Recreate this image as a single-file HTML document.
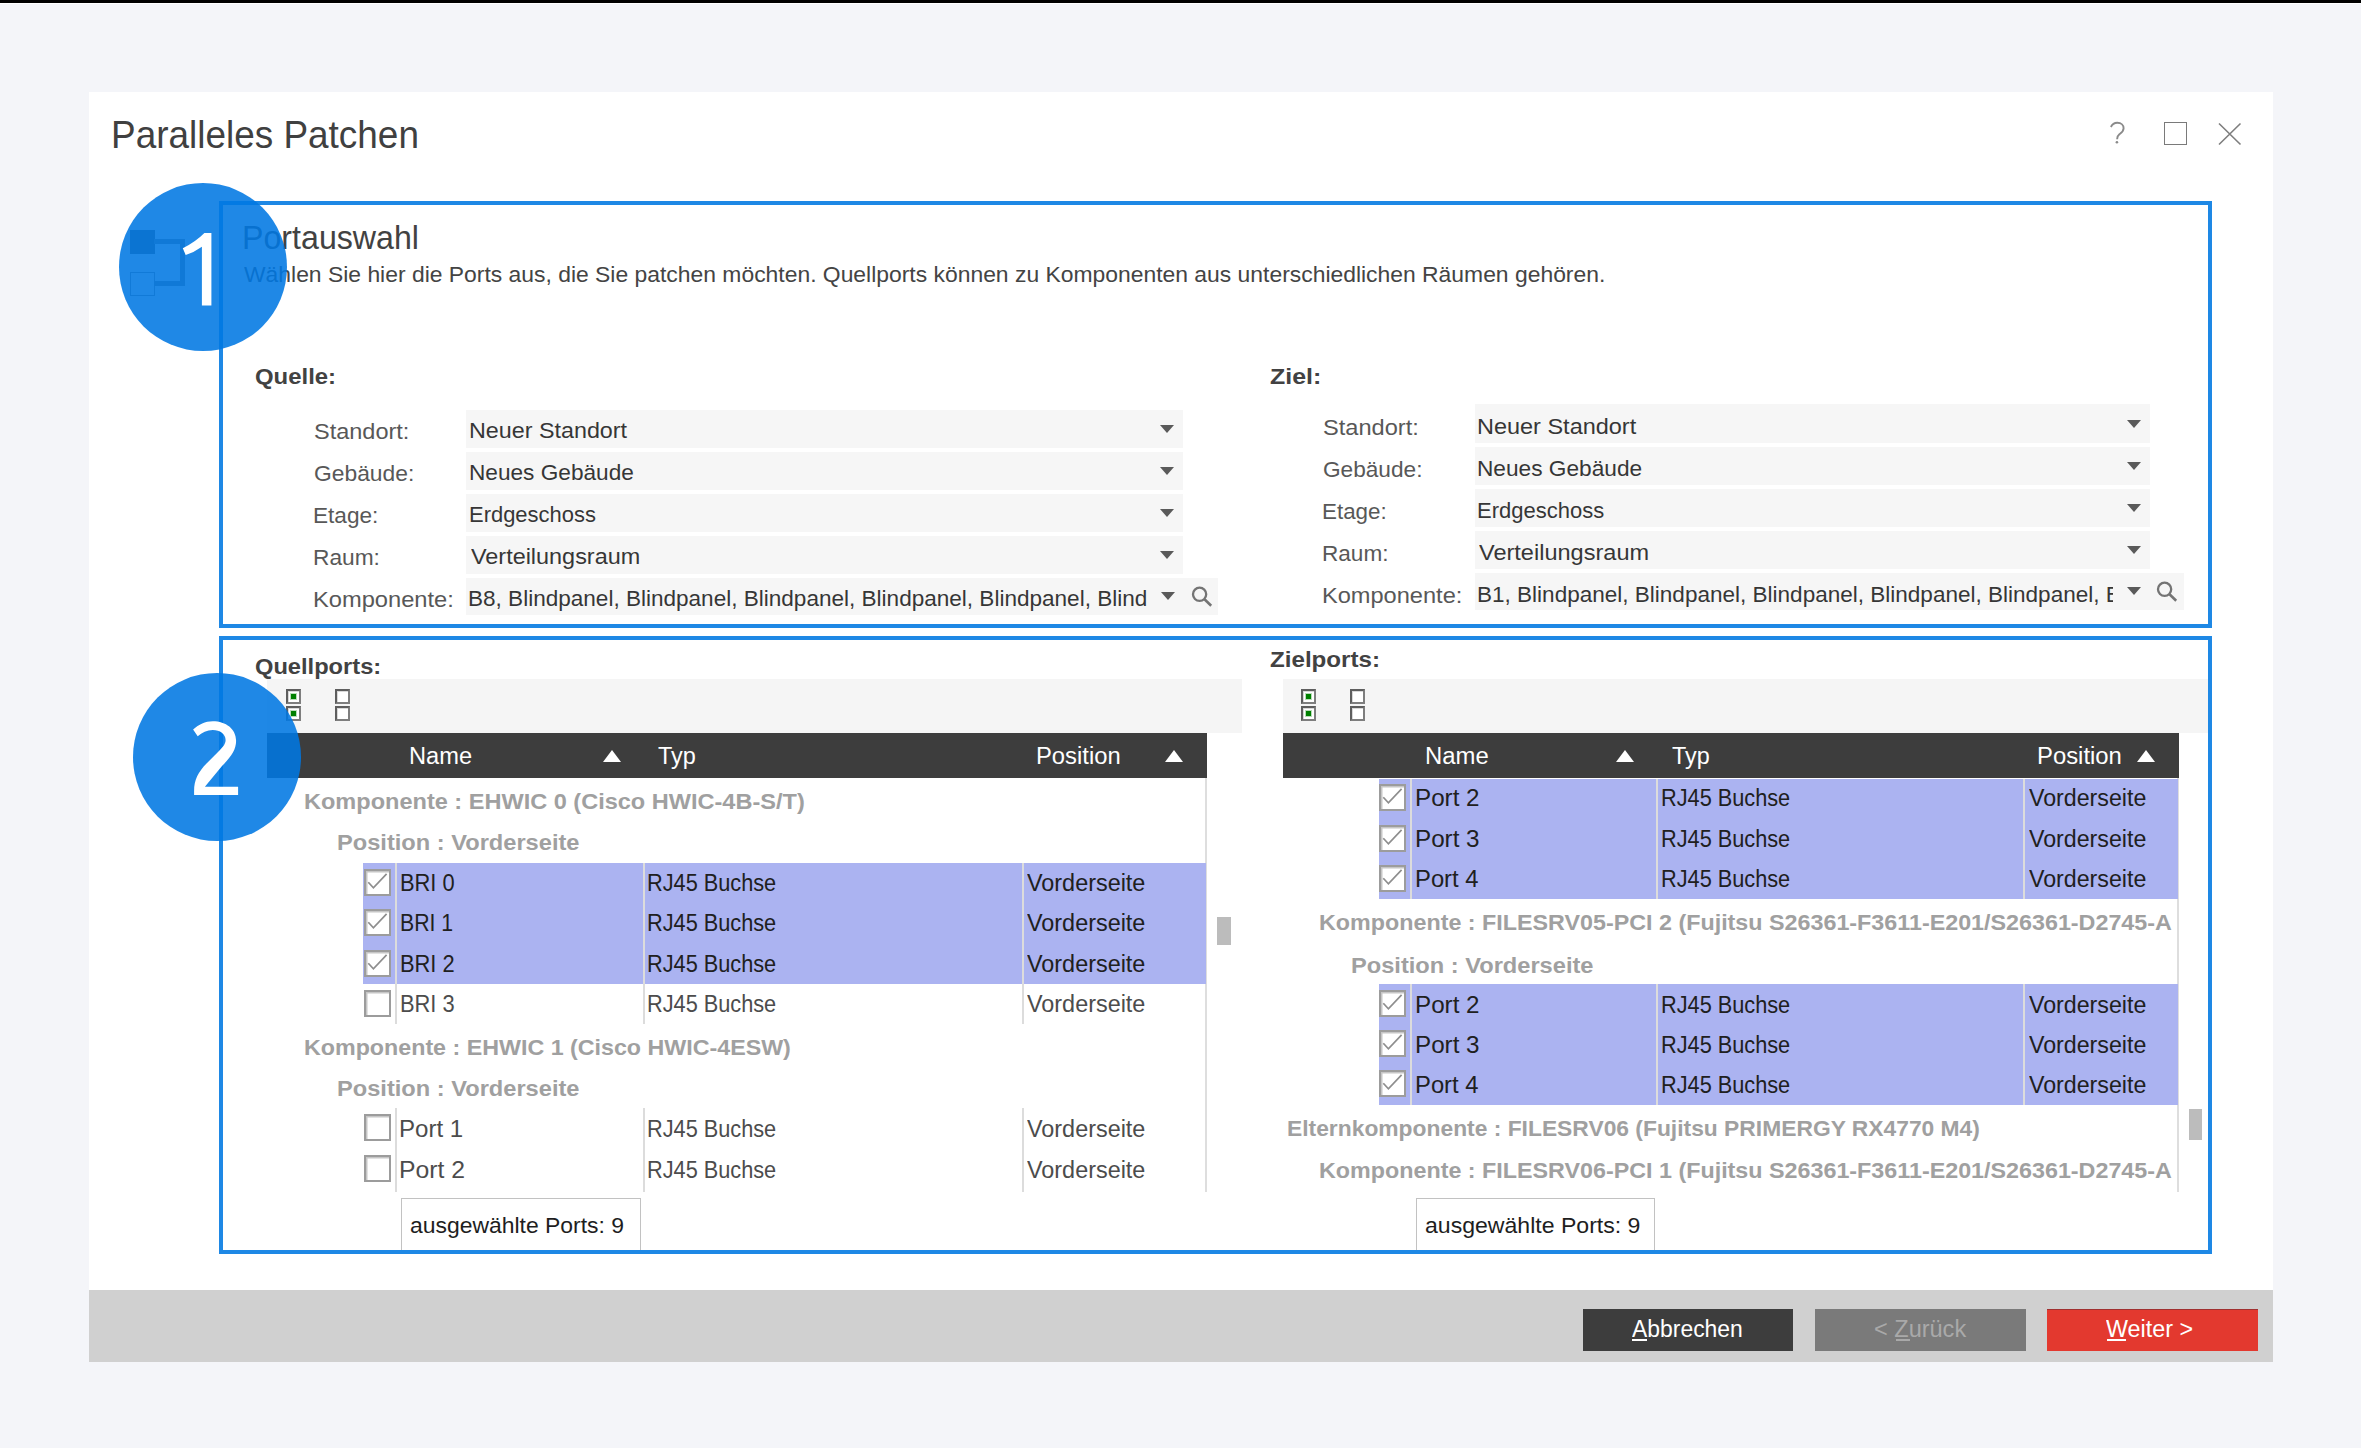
<!DOCTYPE html>
<html><head><meta charset="utf-8">
<style>
html,body{margin:0;padding:0;width:2361px;height:1448px;overflow:hidden;background:#f4f5f9;font-family:"Liberation Sans",sans-serif;}
.a{position:absolute;box-sizing:border-box;}
.t{position:absolute;white-space:pre;line-height:1;transform-origin:0 0;font-family:"Liberation Sans",sans-serif;}
.fld{position:absolute;background:#f6f6f6;}
.arr{position:absolute;width:0;height:0;border-left:7px solid transparent;border-right:7px solid transparent;border-top:8px solid #5a5a5a;}
.sarr{position:absolute;width:0;height:0;border-left:9px solid transparent;border-right:9px solid transparent;border-bottom:12px solid #fff;}
.cb{position:absolute;width:27px;height:27px;box-sizing:border-box;background:#fff;border:2px solid #9c9c9c;box-shadow:inset 1.5px 1.5px 0 #c6c6c6;}
.sel{position:absolute;background:#abb3f1;}
.vsep{position:absolute;width:2px;background:#dcdcdc;}
.ti{position:absolute;width:15px;height:15px;box-sizing:border-box;border:2px solid;border-color:#5e5e5e #7e7e7e #7e7e7e #5e5e5e;background:#fff;box-shadow:inset 1px 1px 0 #d8d8d8;}
.ti i{position:absolute;left:3px;top:3px;width:5px;height:5px;background:#008000;box-shadow:0 0 0 1px #b9dcb9;}
</style></head><body>
<!-- top black bar -->
<div class="a" style="left:0;top:0;width:2361px;height:3px;background:#000"></div>
<div class="a" style="left:0;top:3px;width:2361px;height:1px;background:#fff"></div>

<!-- dialog -->
<div class="a" style="left:89px;top:92px;width:2184px;height:1198px;background:#fff"></div>
<div class="a" style="left:89px;top:1290px;width:2184px;height:72px;background:#d0d0d0"></div>

<!-- title bar icons -->
<div class="a" style="left:2163.5px;top:122px;width:23.5px;height:23px;border:1.7px solid #7a7a7a"></div>
<svg class="a" style="left:2216px;top:121px" width="28" height="28" viewBox="0 0 28 28"><path d="M3 2.5 L24.5 23.5 M24.5 2.5 L3 23.5" stroke="#7e7e7e" stroke-width="1.6" fill="none"/></svg>

<svg class="a" style="left:0;top:0" width="2300" height="160" viewBox="0 0 2300 160"><path d="M2110.9,127 C2112.3,124 2114.8,122.8 2117.3,122.8 C2121.3,122.8 2123.6,125.2 2123.6,128.2 C2123.6,131.2 2121.4,132.6 2119.6,134 C2117.8,135.4 2117.1,136.8 2117.1,139.3" stroke="#8a8a8a" stroke-width="1.9" fill="none"/><circle cx="2116.9" cy="142.3" r="1.3" fill="#8a8a8a"/></svg>
<!-- box 1 -->
<div class="a" style="left:219px;top:201px;width:1993px;height:427px;border:4px solid #1e88e5"></div>
<!-- box 2 -->
<div class="a" style="left:219px;top:636px;width:1993px;height:618px;border:4px solid #1e88e5"></div>

<!-- fields left -->
<div class="fld" style="left:466px;top:410px;width:717px;height:38px"></div>
<div class="fld" style="left:466px;top:452px;width:717px;height:38px"></div>
<div class="fld" style="left:466px;top:494px;width:717px;height:38px"></div>
<div class="fld" style="left:466px;top:536px;width:717px;height:38px"></div>
<div class="fld" style="left:466px;top:578px;width:752px;height:37px"></div>
<div class="arr" style="left:1160px;top:425px"></div>
<div class="arr" style="left:1160px;top:467px"></div>
<div class="arr" style="left:1160px;top:509px"></div>
<div class="arr" style="left:1160px;top:551px"></div>
<div class="arr" style="left:1161px;top:592px"></div>
<svg class="a" style="left:1190px;top:584px" width="24" height="24" viewBox="0 0 24 24"><circle cx="9.6" cy="10.3" r="6.6" stroke="#747474" stroke-width="2.3" fill="none"/><path d="M14.5 15.2 L21.2 21.8" stroke="#747474" stroke-width="2.6"/></svg>

<!-- fields right -->
<div class="fld" style="left:1475px;top:404px;width:675px;height:38.5px"></div>
<div class="fld" style="left:1475px;top:446.5px;width:675px;height:38.5px"></div>
<div class="fld" style="left:1475px;top:488.5px;width:675px;height:38.5px"></div>
<div class="fld" style="left:1475px;top:530.5px;width:675px;height:38.5px"></div>
<div class="fld" style="left:1475px;top:573px;width:709px;height:37px"></div>
<div class="arr" style="left:2127px;top:420px"></div>
<div class="arr" style="left:2127px;top:462px"></div>
<div class="arr" style="left:2127px;top:504px"></div>
<div class="arr" style="left:2127px;top:546px"></div>
<div class="arr" style="left:2127px;top:587px"></div>
<svg class="a" style="left:2155px;top:579px" width="24" height="24" viewBox="0 0 24 24"><circle cx="9.6" cy="10.3" r="6.6" stroke="#747474" stroke-width="2.3" fill="none"/><path d="M14.5 15.2 L21.2 21.8" stroke="#747474" stroke-width="2.6"/></svg>

<!-- toolbars -->
<div class="a" style="left:267px;top:679px;width:975px;height:54px;background:#f5f5f5"></div>
<div class="a" style="left:1283px;top:679px;width:925px;height:54px;background:#f5f5f5"></div>
<div class="ti" style="left:286px;top:689px"><i></i></div>
<div class="ti" style="left:286px;top:706px"><i></i></div>
<div class="ti" style="left:335px;top:689px"></div>
<div class="ti" style="left:335px;top:706px"></div>
<div class="ti" style="left:1301px;top:689px"><i></i></div>
<div class="ti" style="left:1301px;top:706px"><i></i></div>
<div class="ti" style="left:1350px;top:689px"></div>
<div class="ti" style="left:1350px;top:706px"></div>

<!-- headers -->
<div class="a" style="left:267px;top:733px;width:940px;height:45px;background:#3d3d3d"></div>
<div class="a" style="left:1283px;top:733px;width:896px;height:45px;background:#3d3d3d"></div>
<div class="sarr" style="left:603px;top:749.5px"></div>
<div class="sarr" style="left:1165px;top:749.5px"></div>
<div class="sarr" style="left:1616px;top:749.5px"></div>
<div class="sarr" style="left:2137px;top:749.5px"></div>

<!-- left table body -->
<div class="a" style="left:1205px;top:778px;width:2px;height:414px;background:#dedede"></div>
<div class="sel" style="left:363px;top:862.5px;width:843px;height:121.5px"></div>
<div class="vsep" style="left:395px;top:862.5px;height:161.5px"></div>
<div class="vsep" style="left:642.5px;top:862.5px;height:161.5px"></div>
<div class="vsep" style="left:1021.5px;top:862.5px;height:161.5px"></div>
<div class="vsep" style="left:395px;top:1108px;height:84px"></div>
<div class="vsep" style="left:642.5px;top:1108px;height:84px"></div>
<div class="vsep" style="left:1021.5px;top:1108px;height:84px"></div>
<div class="cb" style="left:364px;top:868.5px"><svg width="23" height="23" style="position:absolute;left:0;top:0" viewBox="0 0 23 23"><path d="M2.3 11.2 L7.4 16.8 L20.6 2.9" stroke="#8e8e8e" stroke-width="1.7" fill="none"/></svg></div>
<div class="cb" style="left:364px;top:909.0px"><svg width="23" height="23" style="position:absolute;left:0;top:0" viewBox="0 0 23 23"><path d="M2.3 11.2 L7.4 16.8 L20.6 2.9" stroke="#8e8e8e" stroke-width="1.7" fill="none"/></svg></div>
<div class="cb" style="left:364px;top:949.5px"><svg width="23" height="23" style="position:absolute;left:0;top:0" viewBox="0 0 23 23"><path d="M2.3 11.2 L7.4 16.8 L20.6 2.9" stroke="#8e8e8e" stroke-width="1.7" fill="none"/></svg></div>
<div class="cb" style="left:364px;top:990px"></div>
<div class="cb" style="left:364px;top:1114px"></div>
<div class="cb" style="left:364px;top:1154.5px"></div>
<div class="a" style="left:1217px;top:916.5px;width:13.5px;height:28px;background:#bcbcbc"></div>

<!-- right table body -->
<div class="a" style="left:2177px;top:778px;width:2px;height:414px;background:#dedede"></div>
<div class="sel" style="left:1378.5px;top:778.5px;width:799px;height:120.5px"></div>
<div class="sel" style="left:1378.5px;top:984px;width:799px;height:120.5px"></div>
<div class="vsep" style="left:1410px;top:778.5px;height:120.5px"></div>
<div class="vsep" style="left:1656px;top:778.5px;height:120.5px"></div>
<div class="vsep" style="left:2023px;top:778.5px;height:120.5px"></div>
<div class="vsep" style="left:1410px;top:984px;height:120.5px"></div>
<div class="vsep" style="left:1656px;top:984px;height:120.5px"></div>
<div class="vsep" style="left:2023px;top:984px;height:120.5px"></div>
<div class="cb" style="left:1379px;top:784.0px"><svg width="23" height="23" style="position:absolute;left:0;top:0" viewBox="0 0 23 23"><path d="M2.3 11.2 L7.4 16.8 L20.6 2.9" stroke="#8e8e8e" stroke-width="1.7" fill="none"/></svg></div>
<div class="cb" style="left:1379px;top:824.5px"><svg width="23" height="23" style="position:absolute;left:0;top:0" viewBox="0 0 23 23"><path d="M2.3 11.2 L7.4 16.8 L20.6 2.9" stroke="#8e8e8e" stroke-width="1.7" fill="none"/></svg></div>
<div class="cb" style="left:1379px;top:864.5px"><svg width="23" height="23" style="position:absolute;left:0;top:0" viewBox="0 0 23 23"><path d="M2.3 11.2 L7.4 16.8 L20.6 2.9" stroke="#8e8e8e" stroke-width="1.7" fill="none"/></svg></div>
<div class="cb" style="left:1379px;top:989.5px"><svg width="23" height="23" style="position:absolute;left:0;top:0" viewBox="0 0 23 23"><path d="M2.3 11.2 L7.4 16.8 L20.6 2.9" stroke="#8e8e8e" stroke-width="1.7" fill="none"/></svg></div>
<div class="cb" style="left:1379px;top:1030.0px"><svg width="23" height="23" style="position:absolute;left:0;top:0" viewBox="0 0 23 23"><path d="M2.3 11.2 L7.4 16.8 L20.6 2.9" stroke="#8e8e8e" stroke-width="1.7" fill="none"/></svg></div>
<div class="cb" style="left:1379px;top:1070.0px"><svg width="23" height="23" style="position:absolute;left:0;top:0" viewBox="0 0 23 23"><path d="M2.3 11.2 L7.4 16.8 L20.6 2.9" stroke="#8e8e8e" stroke-width="1.7" fill="none"/></svg></div>
<div class="a" style="left:2188.5px;top:1109px;width:13px;height:30.5px;background:#bcbcbc"></div>

<!-- status boxes -->
<div class="a" style="left:400.5px;top:1198px;width:240px;height:52px;border:1.5px solid #c2c2c2;border-bottom:none;background:#fff"></div>
<div class="a" style="left:1415.5px;top:1198px;width:239px;height:52px;border:1.5px solid #c2c2c2;border-bottom:none;background:#fff"></div>

<!-- buttons -->
<div class="a" style="left:1582.5px;top:1309px;width:210.5px;height:42px;background:#3d3d3d"></div>
<div class="a" style="left:1815px;top:1309px;width:210.5px;height:42px;background:#7a7a7a"></div>
<div class="a" style="left:2047px;top:1309px;width:211px;height:42px;background:#e3392f;border-top:1px solid #a03030"></div>
<div class="a" style="left:1632px;top:1339px;width:14.5px;height:2px;background:#fff"></div>
<div class="a" style="left:1896px;top:1339px;width:13.5px;height:2px;background:#a9a9a9"></div>
<div class="a" style="left:2106.5px;top:1339px;width:19.5px;height:2px;background:#fff"></div>

<!-- icon behind circle 1 -->
<div class="a" style="left:129.5px;top:229.7px;width:25px;height:24.3px;background:#5c5c5c"></div>
<div class="a" style="left:129.5px;top:271.6px;width:25px;height:24.7px;border:1.6px solid #888"></div>
<div class="a" style="left:154.3px;top:239.4px;width:30.5px;height:47px;border:5px solid #808080;border-left:none"></div>

<div class='t' style='left:110.8px;top:116.1px;font-size:38.5px;font-weight:400;color:#404040;transform:scaleX(0.9592)'>Paralleles Patchen</div>
<div class='t' style='left:241.6px;top:222.0px;font-size:32.5px;font-weight:400;color:#424242;transform:scaleX(0.9897)'>Portauswahl</div>
<div class='t' style='left:243.5px;top:263.8px;font-size:22.2px;font-weight:400;color:#444444;transform:scaleX(1.0315)'>Wählen Sie hier die Ports aus, die Sie patchen möchten. Quellports können zu Komponenten aus unterschiedlichen Räumen gehören.</div>
<div class='t' style='left:255.4px;top:364.7px;font-size:22.8px;font-weight:700;color:#424242;transform:scaleX(1.0486)'>Quelle:</div>
<div class='t' style='left:1270.1px;top:364.6px;font-size:22.8px;font-weight:700;color:#424242;transform:scaleX(1.0932)'>Ziel:</div>
<div class='t' style='left:314.4px;top:420.2px;font-size:22.8px;font-weight:400;color:#585858;transform:scaleX(1.0311)'>Standort:</div>
<div class='t' style='left:1323.3px;top:415.5px;font-size:22.8px;font-weight:400;color:#585858;transform:scaleX(1.0356)'>Standort:</div>
<div class='t' style='left:469.0px;top:418.9px;font-size:22.8px;font-weight:400;color:#363636;transform:scaleX(1.0224)'>Neuer Standort</div>
<div class='t' style='left:1476.9px;top:415.0px;font-size:22.8px;font-weight:400;color:#363636;transform:scaleX(1.0296)'>Neuer Standort</div>
<div class='t' style='left:314.4px;top:462.2px;font-size:22.8px;font-weight:400;color:#585858;transform:scaleX(1.0010)'>Gebäude:</div>
<div class='t' style='left:1323.3px;top:457.5px;font-size:22.8px;font-weight:400;color:#585858;transform:scaleX(0.9928)'>Gebäude:</div>
<div class='t' style='left:469.0px;top:460.9px;font-size:22.8px;font-weight:400;color:#363636;transform:scaleX(0.9926)'>Neues Gebäude</div>
<div class='t' style='left:1477.0px;top:457.0px;font-size:22.8px;font-weight:400;color:#363636;transform:scaleX(0.9945)'>Neues Gebäude</div>
<div class='t' style='left:313.4px;top:504.3px;font-size:22.8px;font-weight:400;color:#585858;transform:scaleX(0.9919)'>Etage:</div>
<div class='t' style='left:1322.3px;top:499.6px;font-size:22.8px;font-weight:400;color:#585858;transform:scaleX(0.9823)'>Etage:</div>
<div class='t' style='left:469.1px;top:503.0px;font-size:22.8px;font-weight:400;color:#363636;transform:scaleX(0.9628)'>Erdgeschoss</div>
<div class='t' style='left:1477.1px;top:499.1px;font-size:22.8px;font-weight:400;color:#363636;transform:scaleX(0.9651)'>Erdgeschoss</div>
<div class='t' style='left:313.4px;top:546.3px;font-size:22.8px;font-weight:400;color:#585858;transform:scaleX(0.9968)'>Raum:</div>
<div class='t' style='left:1322.3px;top:541.6px;font-size:22.8px;font-weight:400;color:#585858;transform:scaleX(0.9905)'>Raum:</div>
<div class='t' style='left:471.0px;top:545.0px;font-size:22.8px;font-weight:400;color:#363636;transform:scaleX(1.0270)'>Verteilungsraum</div>
<div class='t' style='left:1479.0px;top:541.1px;font-size:22.8px;font-weight:400;color:#363636;transform:scaleX(1.0325)'>Verteilungsraum</div>
<div class='t' style='left:313.3px;top:588.3px;font-size:22.8px;font-weight:400;color:#585858;transform:scaleX(1.0386)'>Komponente:</div>
<div class='t' style='left:1322.2px;top:583.6px;font-size:22.8px;font-weight:400;color:#585858;transform:scaleX(1.0348)'>Komponente:</div>
<div class='a' style='left:0;top:0;width:1148px;height:1448px;overflow:hidden'><div class='t' style='left:468.3px;top:587.0px;font-size:22.8px;font-weight:400;color:#363636;transform:scaleX(0.9889)'>B8, Blindpanel, Blindpanel, Blindpanel, Blindpanel, Blindpanel, Blindpanel</div></div>
<div class='a' style='left:0;top:0;width:2113px;height:1448px;overflow:hidden'><div class='t' style='left:1477.4px;top:583.1px;font-size:22.8px;font-weight:400;color:#363636;transform:scaleX(0.9882)'>B1, Blindpanel, Blindpanel, Blindpanel, Blindpanel, Blindpanel, Blindpanel</div></div>
<div class='t' style='left:255.0px;top:655.3px;font-size:22.8px;font-weight:700;color:#424242;transform:scaleX(1.0378)'>Quellports:</div>
<div class='t' style='left:1269.9px;top:648.4px;font-size:22.8px;font-weight:700;color:#424242;transform:scaleX(1.0594)'>Zielports:</div>
<div class='t' style='left:409.3px;top:745.4px;font-size:23px;font-weight:400;color:#ffffff;transform:scaleX(1.0276)'>Name</div>
<div class='t' style='left:658.0px;top:745.4px;font-size:23px;font-weight:400;color:#ffffff;transform:scaleX(1.0194)'>Typ</div>
<div class='t' style='left:1035.9px;top:745.4px;font-size:23px;font-weight:400;color:#ffffff;transform:scaleX(1.0346)'>Position</div>
<div class='t' style='left:1424.6px;top:745.2px;font-size:23px;font-weight:400;color:#ffffff;transform:scaleX(1.0379)'>Name</div>
<div class='t' style='left:1672.2px;top:745.2px;font-size:23px;font-weight:400;color:#ffffff;transform:scaleX(1.0167)'>Typ</div>
<div class='t' style='left:2037.4px;top:745.4px;font-size:23px;font-weight:400;color:#ffffff;transform:scaleX(1.0372)'>Position</div>
<div class='t' style='left:303.9px;top:790.7px;font-size:22px;font-weight:700;color:#a0a0a0;transform:scaleX(1.0697)'>Komponente : EHWIC 0 (Cisco HWIC-4B-S/T)</div>
<div class='t' style='left:336.7px;top:832.3px;font-size:22px;font-weight:700;color:#a0a0a0;transform:scaleX(1.0741)'>Position : Vorderseite</div>
<div class='t' style='left:399.5px;top:871.7px;font-size:23.3px;font-weight:400;color:#202020;transform:scaleX(0.9382)'>BRI 0</div>
<div class='t' style='left:646.6px;top:871.7px;font-size:23.3px;font-weight:400;color:#202020;transform:scaleX(0.9324)'>RJ45 Buchse</div>
<div class='t' style='left:1026.6px;top:871.7px;font-size:23.3px;font-weight:400;color:#202020;transform:scaleX(1.0043)'>Vorderseite</div>
<div class='t' style='left:399.6px;top:912.1px;font-size:23.3px;font-weight:400;color:#202020;transform:scaleX(0.9127)'>BRI 1</div>
<div class='t' style='left:646.6px;top:912.1px;font-size:23.3px;font-weight:400;color:#202020;transform:scaleX(0.9324)'>RJ45 Buchse</div>
<div class='t' style='left:1026.6px;top:912.1px;font-size:23.3px;font-weight:400;color:#202020;transform:scaleX(1.0043)'>Vorderseite</div>
<div class='t' style='left:399.5px;top:952.7px;font-size:23.3px;font-weight:400;color:#202020;transform:scaleX(0.9382)'>BRI 2</div>
<div class='t' style='left:646.6px;top:952.7px;font-size:23.3px;font-weight:400;color:#202020;transform:scaleX(0.9324)'>RJ45 Buchse</div>
<div class='t' style='left:1026.6px;top:952.7px;font-size:23.3px;font-weight:400;color:#202020;transform:scaleX(1.0043)'>Vorderseite</div>
<div class='t' style='left:399.5px;top:993.1px;font-size:23.3px;font-weight:400;color:#4c4c4c;transform:scaleX(0.9382)'>BRI 3</div>
<div class='t' style='left:646.6px;top:993.1px;font-size:23.3px;font-weight:400;color:#4c4c4c;transform:scaleX(0.9324)'>RJ45 Buchse</div>
<div class='t' style='left:1026.6px;top:993.1px;font-size:23.3px;font-weight:400;color:#4c4c4c;transform:scaleX(1.0043)'>Vorderseite</div>
<div class='t' style='left:303.9px;top:1036.6px;font-size:22px;font-weight:700;color:#a0a0a0;transform:scaleX(1.0566)'>Komponente : EHWIC 1 (Cisco HWIC-4ESW)</div>
<div class='t' style='left:336.7px;top:1078.2px;font-size:22px;font-weight:700;color:#a0a0a0;transform:scaleX(1.0741)'>Position : Vorderseite</div>
<div class='t' style='left:398.7px;top:1117.9px;font-size:23.3px;font-weight:400;color:#4c4c4c;transform:scaleX(1.0339)'>Port 1</div>
<div class='t' style='left:646.6px;top:1117.9px;font-size:23.3px;font-weight:400;color:#4c4c4c;transform:scaleX(0.9324)'>RJ45 Buchse</div>
<div class='t' style='left:1026.6px;top:1117.9px;font-size:23.3px;font-weight:400;color:#4c4c4c;transform:scaleX(1.0043)'>Vorderseite</div>
<div class='t' style='left:398.7px;top:1158.6px;font-size:23.3px;font-weight:400;color:#4c4c4c;transform:scaleX(1.0627)'>Port 2</div>
<div class='t' style='left:646.6px;top:1158.6px;font-size:23.3px;font-weight:400;color:#4c4c4c;transform:scaleX(0.9324)'>RJ45 Buchse</div>
<div class='t' style='left:1026.6px;top:1158.6px;font-size:23.3px;font-weight:400;color:#4c4c4c;transform:scaleX(1.0043)'>Vorderseite</div>
<div class='t' style='left:1415.2px;top:787.3px;font-size:23.3px;font-weight:400;color:#202020;transform:scaleX(1.0390)'>Port 2</div>
<div class='t' style='left:1660.5px;top:787.3px;font-size:23.3px;font-weight:400;color:#202020;transform:scaleX(0.9324)'>RJ45 Buchse</div>
<div class='t' style='left:2028.5px;top:787.3px;font-size:23.3px;font-weight:400;color:#202020;transform:scaleX(0.9957)'>Vorderseite</div>
<div class='t' style='left:1415.2px;top:827.6px;font-size:23.3px;font-weight:400;color:#202020;transform:scaleX(1.0390)'>Port 3</div>
<div class='t' style='left:1660.5px;top:827.6px;font-size:23.3px;font-weight:400;color:#202020;transform:scaleX(0.9324)'>RJ45 Buchse</div>
<div class='t' style='left:2028.5px;top:827.6px;font-size:23.3px;font-weight:400;color:#202020;transform:scaleX(0.9957)'>Vorderseite</div>
<div class='t' style='left:1415.3px;top:867.8px;font-size:23.3px;font-weight:400;color:#202020;transform:scaleX(1.0217)'>Port 4</div>
<div class='t' style='left:1660.5px;top:867.8px;font-size:23.3px;font-weight:400;color:#202020;transform:scaleX(0.9324)'>RJ45 Buchse</div>
<div class='t' style='left:2028.5px;top:867.8px;font-size:23.3px;font-weight:400;color:#202020;transform:scaleX(0.9957)'>Vorderseite</div>
<div class='t' style='left:1318.9px;top:912.3px;font-size:22px;font-weight:700;color:#a0a0a0;transform:scaleX(1.0590)'>Komponente : FILESRV05-PCI 2 (Fujitsu S26361-F3611-E201/S26361-D2745-A</div>
<div class='t' style='left:1351.4px;top:954.6px;font-size:22px;font-weight:700;color:#a0a0a0;transform:scaleX(1.0741)'>Position : Vorderseite</div>
<div class='t' style='left:1415.2px;top:993.8px;font-size:23.3px;font-weight:400;color:#202020;transform:scaleX(1.0390)'>Port 2</div>
<div class='t' style='left:1660.5px;top:993.8px;font-size:23.3px;font-weight:400;color:#202020;transform:scaleX(0.9324)'>RJ45 Buchse</div>
<div class='t' style='left:2028.5px;top:993.8px;font-size:23.3px;font-weight:400;color:#202020;transform:scaleX(0.9957)'>Vorderseite</div>
<div class='t' style='left:1415.2px;top:1034.0px;font-size:23.3px;font-weight:400;color:#202020;transform:scaleX(1.0390)'>Port 3</div>
<div class='t' style='left:1660.5px;top:1034.0px;font-size:23.3px;font-weight:400;color:#202020;transform:scaleX(0.9324)'>RJ45 Buchse</div>
<div class='t' style='left:2028.5px;top:1034.0px;font-size:23.3px;font-weight:400;color:#202020;transform:scaleX(0.9957)'>Vorderseite</div>
<div class='t' style='left:1415.3px;top:1074.1px;font-size:23.3px;font-weight:400;color:#202020;transform:scaleX(1.0217)'>Port 4</div>
<div class='t' style='left:1660.5px;top:1074.1px;font-size:23.3px;font-weight:400;color:#202020;transform:scaleX(0.9324)'>RJ45 Buchse</div>
<div class='t' style='left:2028.5px;top:1074.1px;font-size:23.3px;font-weight:400;color:#202020;transform:scaleX(0.9957)'>Vorderseite</div>
<div class='t' style='left:1287.0px;top:1117.6px;font-size:22px;font-weight:700;color:#a0a0a0;transform:scaleX(1.0375)'>Elternkomponente : FILESRV06 (Fujitsu PRIMERGY RX4770 M4)</div>
<div class='t' style='left:1318.9px;top:1159.8px;font-size:22px;font-weight:700;color:#a0a0a0;transform:scaleX(1.0590)'>Komponente : FILESRV06-PCI 1 (Fujitsu S26361-F3611-E201/S26361-D2745-A</div>
<div class='t' style='left:410.0px;top:1215.2px;font-size:22.6px;font-weight:400;color:#1e1e1e;transform:scaleX(1.0144)'>ausgewählte Ports: 9</div>
<div class='t' style='left:1425.0px;top:1215.2px;font-size:22.6px;font-weight:400;color:#1e1e1e;transform:scaleX(1.0211)'>ausgewählte Ports: 9</div>
<div class='t' style='left:1631.9px;top:1317.5px;font-size:23px;font-weight:400;color:#ffffff;transform:scaleX(0.9964)'>Abbrechen</div>
<div class='t' style='left:1874.0px;top:1317.5px;font-size:23px;font-weight:400;color:#a9a9a9;transform:scaleX(1.0225)'>< Zurück</div>
<div class='t' style='left:2106.4px;top:1317.5px;font-size:23px;font-weight:400;color:#ffffff;transform:scaleX(1.0141)'>Weiter ></div>

<!-- circles -->
<div class="a" style="left:119px;top:183px;width:168px;height:168px;border-radius:50%;background:rgba(0,120,226,0.88)"></div>
<div class="a" style="left:133px;top:672.5px;width:168px;height:168px;border-radius:50%;background:rgba(0,120,226,0.88)"></div>
<svg class="a" style="left:0;top:0" width="400" height="900" viewBox="0 0 400 900">
<path fill="#fff" d="M204.4,233.1 L211.4,233.1 L211.4,305.4 L201.9,305.4 L201.9,246.8 Q194,252.5 185.7,255.1 L182.8,248.2 Q195,242.5 204.4,233.1 Z"/>
<path fill="#fff" d="M193.1,729.4 C199,724.5 205,721.2 212.8,721.2 C226,721.2 236.1,729 236.1,740.8 C236.1,750 231,757 222,766 L204.9,786.8 L238.1,786.8 L238.1,795 L194.1,795 L194.1,791 C194.1,780 198,772 207,763 L218,752 C223,747 225.6,744 225.6,740 C225.6,734 220,730 212.8,730 C207,730 202,732.5 197.7,736.2 Z"/>
</svg>

</body></html>
